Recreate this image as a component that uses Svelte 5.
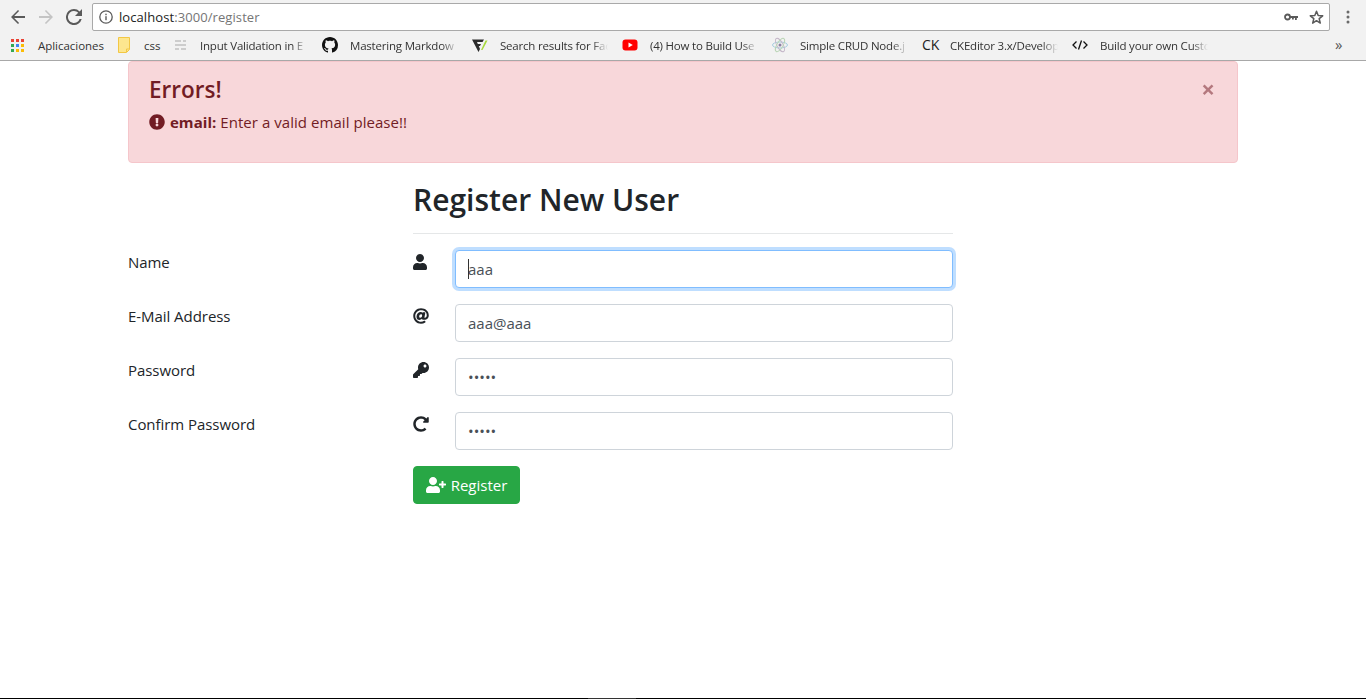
<script>
  const bookmarks = [
    { id: 'apps', label: 'Aplicaciones', w: 66, box: 15 },
    { id: 'folder', label: 'css', w: 16, box: 14 },
    { id: 'lines', label: 'Input Validation in E', w: 108, fade: true, box: 14 },
    { id: 'github', label: 'Mastering Markdow', w: 108, fade: true, box: 16 },
    { id: 'vee', label: 'Search results for Fac', w: 108, fade: true, box: 16 },
    { id: 'yt', label: '(4) How to Build Use', w: 108, fade: true, box: 16 },
    { id: 'atom', label: 'Simple CRUD Node.j', w: 108, fade: true, box: 16 },
    { id: 'ck', label: 'CKEditor 3.x/Develop', w: 108, fade: true, box: 16 },
    { id: 'code', label: 'Build your own Custo', w: 108, fade: true, box: 16 }
  ];
  const appColors = ['#ea4335','#ea4335','#ea4335','#34a853','#4285f4','#fbbc05','#34a853','#fbbc05','#fbbc05'];
  const fields = [
    { label: 'Name', icon: 'user', type: 'text', value: 'aaa', focus: true },
    { label: 'E-Mail Address', icon: 'at', type: 'email', value: 'aaa@aaa' },
    { label: 'Password', icon: 'key', type: 'password', value: 'aaaaa' },
    { label: 'Confirm Password', icon: 'redo', type: 'password', value: 'aaaaa' }
  ];
  const fa = {
    user: ['0 0 448 512', 'M224 256c70.7 0 128-57.3 128-128S294.7 0 224 0 96 57.3 96 128s57.3 128 128 128zm89.6 32h-16.7c-22.2 10.2-46.9 16-72.9 16s-50.6-5.8-72.9-16h-16.7C60.2 288 0 348.2 0 422.4V464c0 26.5 21.5 48 48 48h352c26.5 0 48-21.5 48-48v-41.6c0-74.2-60.2-134.4-134.4-134.4z'],
    at: ['0 0 512 512', 'M256 8C118.941 8 8 118.919 8 256c0 137.059 110.919 248 248 248 48.154 0 95.342-14.14 135.408-40.223 12.005-7.815 14.625-24.288 5.552-35.372l-10.177-12.433c-7.671-9.371-21.179-11.667-31.373-5.129C325.92 429.757 291.314 440 256 440c-101.458 0-184-82.542-184-184S154.542 72 256 72c100.139 0 184 57.619 184 160 0 38.786-21.093 79.742-58.17 83.693-17.349-.454-16.91-12.857-13.476-30.024l23.433-121.11C394.653 149.75 383.308 136 368.225 136h-44.981a13.518 13.518 0 0 0-13.432 11.993l-.01.092c-14.697-17.901-40.448-21.775-59.971-21.775-74.58 0-137.831 62.234-137.831 151.46 0 65.303 36.785 105.87 96 105.87 26.984 0 57.369-15.637 74.991-38.333 9.522 34.104 40.613 34.103 70.71 34.103C462.609 379.41 504 307.798 504 232 504 95.653 394.023 8 256 8zm-21.68 304.43c-22.249 0-36.07-15.623-36.07-40.771 0-44.993 30.779-72.729 58.63-72.729 22.292 0 35.601 15.241 35.601 40.77 0 45.061-33.875 72.73-58.161 72.73z'],
    key: ['0 0 512 512', 'M512 176.001C512 273.203 433.202 352 336 352c-11.22 0-22.19-1.062-32.827-3.069l-24.012 27.014A23.999 23.999 0 0 1 261.223 384H224v40c0 13.255-10.745 24-24 24h-40v40c0 13.255-10.745 24-24 24H24c-13.255 0-24-10.745-24-24v-78.059c0-6.365 2.529-12.47 7.029-16.971l161.802-161.802C163.108 213.814 160 195.271 160 176 160 78.798 238.797.001 335.999 0 433.488-.001 512 78.511 512 176.001zM336 128c0 26.51 21.49 48 48 48s48-21.49 48-48-21.49-48-48-48-48 21.49-48 48z'],
    redo: ['0 0 512 512', 'M256.455 8c66.269.119 126.437 26.233 170.859 68.685l35.715-35.715C478.149 25.851 504 36.559 504 57.941V192c0 13.255-10.745 24-24 24H345.941c-21.382 0-32.09-25.851-16.971-40.971l41.75-41.75c-30.864-28.899-70.801-44.907-113.23-45.273-92.398-.798-170.283 73.977-169.484 169.442C88.764 348.009 162.184 424 256 424c41.127 0 79.997-14.678 110.629-41.556 4.743-4.161 11.906-3.908 16.368.553l39.662 39.662c4.872 4.872 4.631 12.815-.482 17.433C378.202 479.813 319.926 504 256 504 119.034 504 8.001 392.967 8 256.002 7.999 119.193 119.646 7.755 256.455 8z'],
    alert: ['0 0 512 512', 'M504 256c0 136.997-111.043 248-248 248S8 392.997 8 256C8 119.083 119.043 8 256 8s248 111.083 248 248zm-248 50c-25.405 0-46 20.595-46 46s20.595 46 46 46 46-20.595 46-46-20.595-46-46-46zm-43.673-165.346l7.418 136c.347 6.364 5.609 11.346 11.982 11.346h48.546c6.373 0 11.635-4.982 11.982-11.346l7.418-136c.375-6.874-5.098-12.654-11.982-12.654h-63.383c-6.884 0-12.356 5.78-11.981 12.654z'],
    plus: ['0 0 640 512', 'M624 208h-64v-64c0-8.8-7.2-16-16-16h-32c-8.8 0-16 7.2-16 16v64h-64c-8.8 0-16 7.2-16 16v32c0 8.8 7.2 16 16 16h64v64c0 8.8 7.2 16 16 16h32c8.8 0 16-7.2 16-16v-64h64c8.8 0 16-7.2 16-16v-32c0-8.8-7.2-16-16-16zm-400 48c70.7 0 128-57.3 128-128S294.7 0 224 0 96 57.3 96 128s57.3 128 128 128zm89.6 32h-16.7c-22.2 10.2-46.9 16-72.9 16s-50.6-5.8-72.9-16h-16.7C60.2 288 0 348.2 0 422.4V464c0 26.5 21.5 48 48 48h352c26.5 0 48-21.5 48-48v-41.6c0-74.2-60.2-134.4-134.4-134.4z']
  };
</script>

<div class="page">
  <header class="chrome">
    <div class="toolbar">
      <div class="nav">
        <svg width="16" height="16" viewBox="0 0 16 16"><path d="M15 7H4.2l4.9-4.9L8 1 1 8l7 7 1.100-1.100L4.200 9H15z" fill="#5a5a5a"/></svg>
        <svg width="16" height="16" viewBox="0 0 16 16"><path d="M1 7h10.800L6.900 2.100 8 1l7 7-7 7-1.100-1.100L11.800 9H1z" fill="#c4c4c4"/></svg>
        <svg width="16" height="16" viewBox="0 0 16 16"><path d="M13.600 2.400A7.900 7.900 0 0 0 8 0a8 8 0 1 0 7.700 10h-2.100A6 6 0 1 1 8 2c1.700 0 3.100.7 4.200 1.800L9 7h7V0z" fill="#5a5a5a"/></svg>
      </div>
      <div class="omnibox">
        <svg class="info" width="14" height="14" viewBox="0 0 14 14"><circle cx="7" cy="7" r="6.200" fill="none" stroke="#5a5a5a" stroke-width="1.300"/><rect x="6.300" y="6.200" width="1.400" height="4" fill="#5a5a5a"/><rect x="6.300" y="3.700" width="1.400" height="1.500" fill="#5a5a5a"/></svg>
        <span class="url"><span class="host">localhost</span>:3000/register</span>
        <svg class="omni-key" width="14" height="8" viewBox="0 0 14 8"><circle cx="3.500" cy="4" r="2.500" fill="none" stroke="#5a5a5a" stroke-width="1.800"/><path d="M6 3h8v2h-1.200v2H11V5H9.800v1.500H8V5H6z" fill="#5a5a5a"/></svg>
        <svg width="15" height="15" viewBox="0 0 15 15"><path d="M7.500 1.300l1.700 4.200 4.500.3-3.500 2.900 1.100 4.400-3.800-2.400-3.800 2.400 1.100-4.400L1.300 5.800l4.500-.3z" fill="none" stroke="#5a5a5a" stroke-width="1.500" stroke-linejoin="round"/></svg>
      </div>
      <svg class="menu" width="4" height="14" viewBox="0 0 4 14"><circle cx="2" cy="2" r="1.500" fill="#6a6a6a"/><circle cx="2" cy="7" r="1.500" fill="#6a6a6a"/><circle cx="2" cy="12" r="1.500" fill="#6a6a6a"/></svg>
    </div>
    <nav class="bookmarks">
      {#each bookmarks as b}
        <div class="bm">
          <span class="bm-icon" style="width:{b.box}px">
            {#if b.id === 'apps'}
              <span class="apps">{#each appColors as c}<i style="background:{c}"></i>{/each}</span>
            {:else if b.id === 'folder'}
              <svg width="12" height="16" viewBox="0 0 12 16"><path d="M.5.500h11v12l-3 3H.5z" fill="#fde68f" stroke="#f2c744"/><path d="M8.500 15v-3h3" fill="none" stroke="#f2c744"/></svg>
            {:else if b.id === 'lines'}
              <svg width="12" height="10" viewBox="0 0 12 10" fill="#cdcdcd"><rect x="1" y="0" width="6" height="2"/><rect x="9" y="0" width="3" height="2"/><rect x="1" y="4" width="11" height="2"/><rect x="1" y="8" width="4" height="2"/><rect x="7" y="8" width="5" height="2"/></svg>
            {:else if b.id === 'github'}
              <svg width="16" height="16" viewBox="0 0 16 16"><path d="M8 0C3.580 0 0 3.580 0 8c0 3.540 2.290 6.530 5.470 7.590.4.070.55-.17.550-.38 0-.19-.01-.82-.01-1.490-2.010.37-2.530-.49-2.690-.94-.09-.23-.48-.94-.82-1.130-.28-.15-.68-.52-.01-.53.63-.01 1.080.58 1.230.82.720 1.210 1.870.87 2.330.66.070-.52.280-.87.510-1.070-1.780-.2-3.640-.89-3.640-3.950 0-.87.310-1.590.82-2.150-.08-.2-.36-1.020.08-2.120 0 0 .67-.21 2.200.82.640-.18 1.320-.27 2-.27s1.360.09 2 .27c1.530-1.040 2.200-.82 2.200-.82.440 1.100.16 1.920.08 2.120.51.560.82 1.270.82 2.150 0 3.070-1.870 3.750-3.650 3.950.29.250.54.730.54 1.480 0 1.070-.01 1.930-.01 2.200 0 .21.150.46.550.38A8.010 8.010 0 0 0 16 8c0-4.420-3.580-8-8-8z" fill="#111"/></svg>
            {:else if b.id === 'vee'}
              <svg width="16" height="16" viewBox="0 0 16 16"><path d="M0 2.500h12L10.500 5H5l.8 2H9L8 9H6.800L8 12l-1.500 3z" fill="#2b2b2b"/><path d="M15.500 3.500L10.500 13H9l4.500-9.500z" fill="#a6d93a"/></svg>
            {:else if b.id === 'yt'}
              <svg width="16" height="16" viewBox="0 0 16 16"><rect x="0.500" y="2.500" width="15" height="11" rx="3" fill="#f00"/><path d="M6.500 5.500v5l4.300-2.500z" fill="#fff"/></svg>
            {:else if b.id === 'atom'}
              <svg width="16" height="16" viewBox="0 0 16 16" fill="none" stroke-width=".9"><ellipse cx="8" cy="8" rx="7.500" ry="3" stroke="#9cc9dd"/><ellipse cx="8" cy="8" rx="7.500" ry="3" stroke="#c4b6c8" transform="rotate(60 8 8)"/><ellipse cx="8" cy="8" rx="7.500" ry="3" stroke="#b9d4b5" transform="rotate(120 8 8)"/><circle cx="8" cy="8" r="1.500" fill="#8c7ea3"/></svg>
            {:else if b.id === 'ck'}
              <span class="ck">CK</span>
            {:else if b.id === 'code'}
              <svg width="16" height="16" viewBox="0 0 16 16" fill="none" stroke="#111" stroke-width="1.300"><path d="M4.500 4.500L1 8l3.500 3.500M11.500 4.500L15 8l-3.500 3.500M9.500 3.500L6.500 12.500"/></svg>
            {/if}
          </span>
          <span class="bm-text" class:fade={b.fade} style="width:{b.w}px">{b.label}</span>
        </div>
      {/each}
      <span class="more">»</span>
    </nav>
  </header>

  <main class="content">
    <div class="alert">
      <button class="close" aria-label="Close">×</button>
      <h4>Errors!</h4>
      <p>
        <svg class="fa alert-icon" viewBox={fa.alert[0]}><path d={fa.alert[1]} /></svg>
        <strong>email:</strong> Enter a valid email please!!
      </p>
    </div>

    <form class="form">
      <div class="row head">
        <div></div>
        <div class="head-col">
          <h2>Register New User</h2>
          <hr />
        </div>
      </div>
      {#each fields as f}
        <div class="row field">
          <label for={f.icon}>{f.label}</label>
          <div class="control">
            <svg class="fa field-icon" viewBox={fa[f.icon][0]} preserveAspectRatio="xMinYMid"><path d={fa[f.icon][1]} /></svg>
            <div class="input-wrap">
              <input id={f.icon} class:focus={f.focus} type={f.type} value={f.value} />
              {#if f.focus}<span class="caret"></span>{/if}
            </div>
          </div>
        </div>
      {/each}
      <div class="row">
        <div></div>
        <div><button type="button" class="btn">
          <svg class="fa btn-icon" viewBox={fa.plus[0]}><path d={fa.plus[1]} /></svg>
          Register
        </button></div>
      </div>
    </form>
  </main>
  <div class="taskbar"><span class="patch"></span></div>
</div>

<style>
  :global(body) { margin: 0; background: #fff; }
  .page {
    height: 699px; display: flex; flex-direction: column; overflow: hidden;
    font-family: "Open Sans", "Noto Sans", sans-serif; color: #212529;
  }
  .chrome { height: 60px; background: #f2f2f2; border-bottom: 1px solid #a8a8a8; flex: none; }
  .toolbar { height: 34px; display: flex; align-items: center; }
  .nav { display: flex; gap: 12px; padding: 0 10px; width: 72px; box-sizing: content-box; align-items: center; }
  .omnibox {
    box-sizing: border-box; width: 1238px; height: 28px; background: #fff;
    border: 1px solid #a9a9a9; border-radius: 2px; display: flex; align-items: center; padding: 0 5px 0 6px;
  }
  .info { margin-right: 6px; flex: none; }
  .url { flex: 1; font-size: 13px; color: #757575; letter-spacing: .08px; }
  .host { color: #222; }
  .omni-key { margin-right: 11px; }
  .menu { margin-left: 16px; }
  .bookmarks { height: 22px; display: flex; align-items: center; padding-left: 11px; position: relative; }
  .bm { display: flex; align-items: center; font-size: 11.500px; color: #333; margin-right: 14px; }
  .bm-icon { display: flex; align-items: center; justify-content: flex-start; margin-right: 12px; flex: none; }
  .bm-text { white-space: nowrap; display: block; letter-spacing: -.03px; }
  .fade { letter-spacing: -.2px; -webkit-mask-image: linear-gradient(to right, #000 85%, transparent 100%); mask-image: linear-gradient(to right, #000 85%, transparent 100%); }
  .apps { display: grid; grid-template-columns: repeat(3, 3px); gap: 2px; }
  .apps i { width: 3px; height: 3px; display: block; }
  .ck { font-size: 14px; color: #222; line-height: 16px; }
  .more { position: absolute; left: 1335px; top: 0; font-size: 15px; color: #555; }

  .content { flex: 1; width: 1110px; margin: 0 auto; }
  .alert {
    position: relative; box-sizing: border-box; height: 102px; background: #f8d7da;
    border: 1px solid #f5c6cb; border-radius: 4px; color: #721c24; padding: 13px 20px 12px;
  }
  .alert h4 { margin: 0 0 6px; font-size: 22.500px; font-weight: 600; line-height: 29px; }
  .alert p { margin: 0; font-size: 15px; line-height: 24px; letter-spacing: .05px; }
  .fa { fill: currentColor; width: 16px; height: 16px; vertical-align: -2px; display: inline-block; }
  .alert-icon { margin-right: 1px; }
  .close {
    position: absolute; top: 12px; right: 22px; border: 0; background: none; padding: 0; opacity: .5;
    color: #721c24; font: 700 24px/29px "Open Sans", sans-serif;
  }
  .row { display: grid; grid-template-columns: 285px 540px; }
  .head { height: 87px; box-sizing: border-box; padding-top: 16px; }
  .head-col { width: 540px; }
  h2 { margin: 0; font-size: 30px; font-weight: 600; line-height: 42px; color: #212529; }
  hr { margin: 12px 0 0; border: 0; border-top: 1px solid #e5e7e8; }
  .field { height: 38px; margin-bottom: 16px; }
  label { font-size: 15px; line-height: 24px; letter-spacing: -.05px; }
  .control { display: flex; }
  .field-icon { width: 16px; height: 16px; margin: 4px 26px 0 0; flex: none; color: #212529; }
  .input-wrap { position: relative; width: 498px; }
  input {
    box-sizing: border-box; width: 100%; height: 38px; padding: 6px 12px; margin: 0; display: block;
    border: 1px solid #ced4da; border-radius: 4px; color: #495057; background: #fff;
    font: 400 15px/24px "Open Sans", sans-serif; outline: none;
  }
  input.focus { border-color: #80bdff; box-shadow: 0 0 0 3px rgba(0, 123, 255, .25); }
  .caret { position: absolute; left: 13px; top: 9px; width: 1px; height: 20px; background: #333; }
  .btn {
    box-sizing: border-box; height: 38px; width: 107px; padding: 0; background: #28a745; color: #fff;
    border: 1px solid #28a745; border-radius: 4px; font: 400 15px/24px "Open Sans", sans-serif;
    display: flex; align-items: center; justify-content: center; gap: 5px;
  }
  .btn-icon { width: 20px; height: 16px; flex: none; }
  .taskbar { height: 1px; background: #000; flex: none; position: relative; }
  .patch { position: absolute; left: 588px; width: 48px; height: 1px; background: #333; }
</style>
